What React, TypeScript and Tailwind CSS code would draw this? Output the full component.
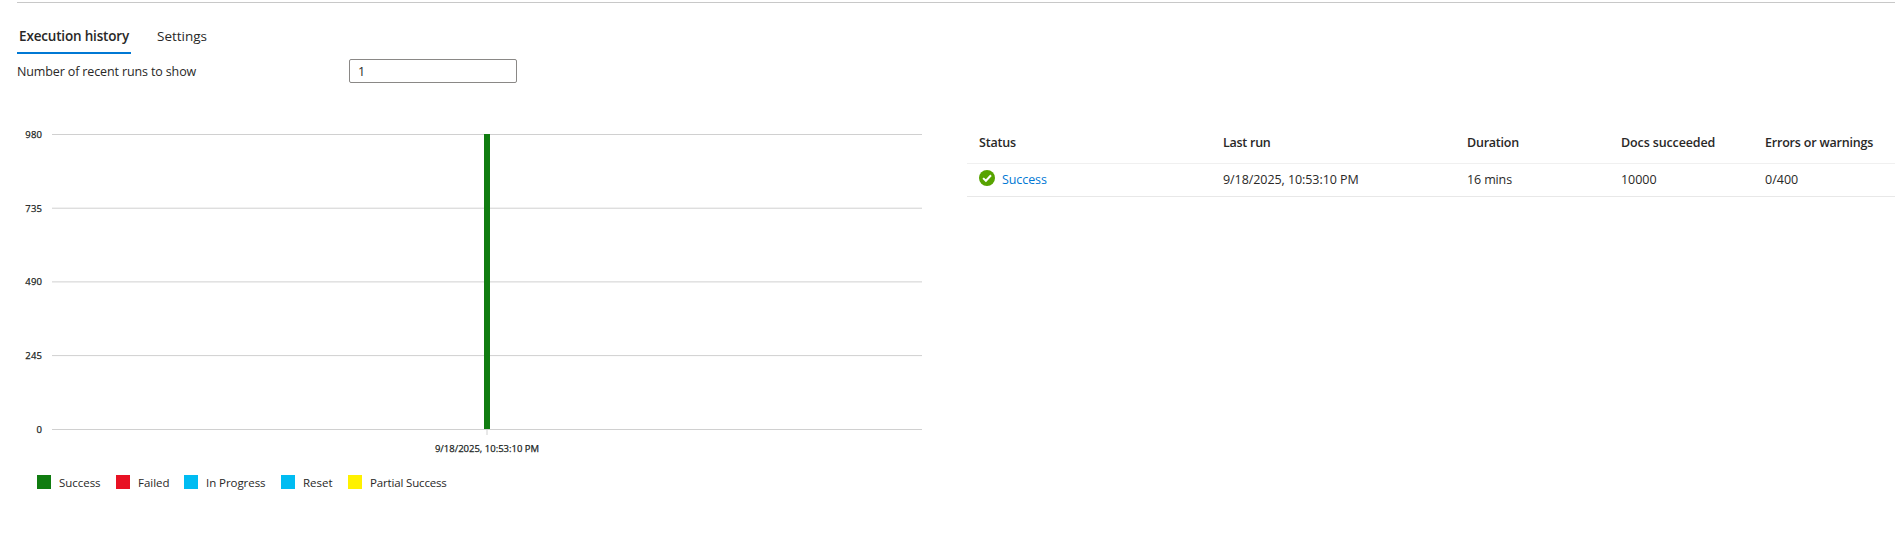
const legend = [
  { label: 'Success', color: 'bg-[#107c10]', width: 'w-[79px]', tracking: 'tracking-[-0.04px]' },
  { label: 'Failed', color: 'bg-[#e81123]', width: 'w-[68px]', tracking: 'tracking-[-0.02px]' },
  { label: 'In Progress', color: 'bg-[#00bcf2]', width: 'w-[97px]', tracking: 'tracking-[-0.06px]' },
  { label: 'Reset', color: 'bg-[#00bcf2]', width: 'w-[67px]', tracking: 'tracking-[-0.02px]' },
  { label: 'Partial Success', color: 'bg-[#fff100]', width: 'w-[110px]', tracking: 'tracking-[-0.16px]' },
];

const columns = [
  { label: 'Status', tracking: 'tracking-[-0.17px]' },
  { label: 'Last run', tracking: 'tracking-[-0.26px]' },
  { label: 'Duration', tracking: 'tracking-[-0.22px]' },
  { label: 'Docs succeeded', tracking: 'tracking-[-0.12px]' },
  { label: 'Errors or warnings', tracking: 'tracking-[-0.2px]' },
];

const gridLines = [
  { value: 980, y: 0.5 },
  { value: 735, y: 74.2 },
  { value: 490, y: 147.9 },
  { value: 245, y: 221.6 },
  { value: 0, y: 295.5 },
];

function SuccessIcon() {
  return (
    <svg viewBox="0 0 16 16" className="-mt-[4px] h-4 w-4 shrink-0" aria-hidden="true">
      <circle cx="8" cy="8" r="8" fill="#57a300" />
      <path d="M4.1 8.1 L6.9 10.8 L12 5.3" fill="none" stroke="#fff" strokeWidth="2" />
    </svg>
  );
}

function Chart() {
  return (
    <div className="w-[922px]">
      <svg viewBox="0 0 922 336" className="block h-[336px] w-[922px] overflow-visible fill-[#201f1e] text-[9.5px]">
        <g transform="translate(0 14)">
          {gridLines.map((line) => (
            <g key={line.value}>
              <line x1="52" x2="922" y1={line.y} y2={line.y} stroke="#d0d0d0" strokeWidth="1" />
              <text x="42.2" y={Math.floor(line.y) + 4} textAnchor="end" className="stroke-[#201f1e] stroke-[0.25px] tracking-[0.2px]">
                {line.value}
              </text>
            </g>
          ))}
          <rect x="484" y="0" width="6" height="295" fill="#107c10" />
          <rect x="486" y="296" width="2" height="5" fill="#e8e8e8" />
          <text x="487" y="318" textAnchor="middle" className="stroke-[#201f1e] stroke-[0.25px]">9/18/2025, 10:53:10 PM</text>
        </g>
      </svg>
      <div className="mt-[19px] flex pl-[37px]">
        {legend.map((item) => (
          <div key={item.label} className={`flex h-[14px] items-start gap-2 ${item.width}`}>
            <span className={`size-[14px] shrink-0 ${item.color}`} />
            <span className={`whitespace-nowrap pt-px text-[11.5px] leading-[14px] ${item.tracking}`}>{item.label}</span>
          </div>
        ))}
      </div>
    </div>
  );
}

function RunsTable() {
  const row = 'grid grid-cols-[244px_244px_154px_144px_1fr] items-center border-b pl-3 text-[12.5px] whitespace-nowrap';
  return (
    <div className="ml-[45px] flex-1">
      <div className={`${row} h-[44px] border-[#f0f0f0] pt-[3px] font-semibold`}>
        {columns.map((column) => (
          <span key={column.label} className={column.tracking}>{column.label}</span>
        ))}
      </div>
      <div className={`${row} h-[33px] border-[#e8e8e8]`}>
        <span className="flex items-center gap-[7px]">
          <SuccessIcon />
          <a className="tracking-[-0.08px] text-[#0078d4]">Success</a>
        </span>
        <span className="tracking-[-0.07px]">9/18/2025, 10:53:10 PM</span>
        <span className="tracking-[-0.13px]">16 mins</span>
        <span className="tracking-[-0.05px]">10000</span>
        <span>0/400</span>
      </div>
    </div>
  );
}

export default function App() {
  return (
    <main className="h-[537px] overflow-hidden bg-white pt-[2px] font-['Open_Sans','Noto_Sans',sans-serif] text-[#292827]">
      <div className="ml-[17px] h-px bg-[#c8c8c8]" />
      <nav className="ml-[17px] flex h-[51px] items-end gap-6 text-[13.5px]">
        <div className="flex h-[34px] w-[114px] justify-center border-b-2 border-[#0078d4] leading-[32px] font-semibold whitespace-nowrap tracking-[-0.18px]">
          Execution history
        </div>
        <div className="h-[34px] pl-[2px] leading-[32px]">Settings</div>
      </nav>
      <div className="mt-[5px] ml-[17px] flex h-6 items-center">
        <label htmlFor="runs" className="w-[332px] pt-[2px] text-[12.5px] tracking-[-0.13px]">Number of recent runs to show</label>
        <input id="runs" defaultValue="1" className="h-6 w-[168px] rounded-[2px] border border-[#8a8886] px-[8px] text-[12.5px]" />
      </div>
      <section className="mt-[37px] flex">
        <Chart />
        <RunsTable />
      </section>
    </main>
  );
}
